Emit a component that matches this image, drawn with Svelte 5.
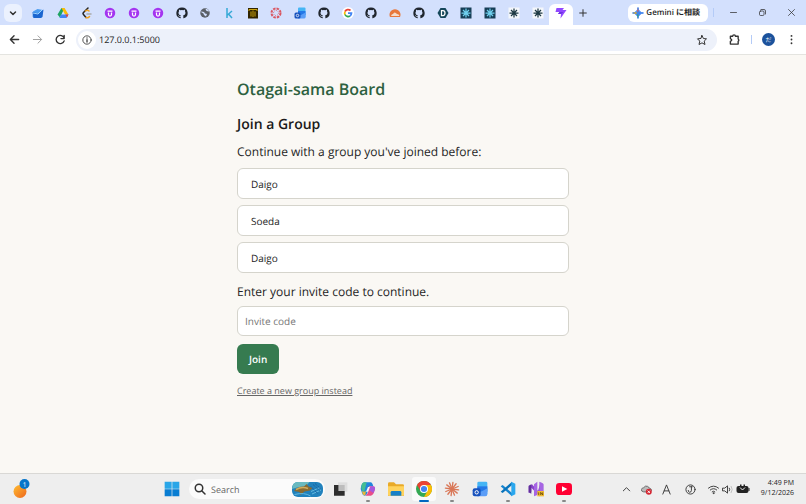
<script>
  let inviteCode = "";
  let address = "127.0.0.1:5000";
  let search = "";

  const groups = ["Daigo", "Soeda", "Daigo"];

  const tabs = [
    "mail",
    "drive",
    "leetcode",
    "udemy",
    "udemy",
    "udemy",
    "github",
    "globe",
    "kaggle",
    "pillars",
    "canvas",
    "outlook",
    "github",
    "google",
    "github",
    "sunrise",
    "github",
    "hexagon",
    "react",
    "react",
    "spark",
    "spark",
    "vite",
  ];

  const apps = [
    { name: "copilot", running: true },
    { name: "folder" },
    { name: "chrome", running: true, active: true },
    { name: "claude", running: true },
    { name: "outlook" },
    { name: "vscode", running: true },
    { name: "visualstudio" },
    { name: "youtube", running: true },
  ];

  const spokes = [0, 30, 60, 90, 120, 150, 180, 210, 240, 270, 300, 330];
</script>

<style>
  :global(body) {
    background-color: #faf8f4;
    font-family: "Open Sans", "Noto Sans CJK JP", sans-serif;
    text-rendering: geometricPrecision;
    color: #242424;
  }

  .window {
    min-height: 100vh;
    display: flex;
    flex-direction: column;
  }

  button,
  input {
    font-family: inherit;
    text-rendering: inherit;
    color: inherit;
    margin: 0;
    padding: 0;
    border: 0;
    background: none;
    box-sizing: border-box;
    outline: none;
  }

  button {
    display: flex;
    align-items: center;
    justify-content: center;
    cursor: pointer;
  }

  svg {
    display: block;
    width: 100%;
    height: 100%;
  }

  .icon {
    display: block;
    flex: none;
    width: 12px;
    height: 12px;
  }

  .tabstrip {
    display: flex;
    align-items: center;
    height: 25px;
    background-color: #d3e0fd;
  }

  .tabsearch {
    flex: none;
    width: 18px;
    height: 18px;
    margin-left: 4px;
    border-radius: 6px;
    background-color: #ebf1fe;
  }

  .tabs {
    display: flex;
    flex: 0 1 549px;
    height: 100%;
    margin-left: 2px;
  }

  .tab {
    flex: 1;
    min-width: 0;
    height: 100%;
  }

  .tab:first-child {
    flex: 0 0 27px;
  }

  .tab.active {
    height: 21px;
    margin-top: 4px;
    padding-bottom: 4px;
    border-radius: 6px 6px 0 0;
    background-color: #fff;
  }

  .newtab {
    width: 20px;
    height: 18px;
  }

  .newtab .icon {
    width: 8px;
    height: 8px;
  }

  .gemini {
    height: 18px;
    margin-left: auto;
    padding: 0 8px 0 4px;
    gap: 2px;
    border-radius: 6px;
    background-color: #fff;
    font-size: 8px;
    font-weight: 600;
    white-space: nowrap;
  }

  .divider {
    flex: none;
    width: 1px;
    height: 9px;
    background-color: #b4cbf7;
  }

  .gemini + .divider {
    margin: 0 5px;
  }

  .caption {
    width: 29px;
    height: 25px;
  }

  .caption .icon {
    width: 9px;
    height: 9px;
  }

  .toolbar {
    display: flex;
    align-items: center;
    height: 29px;
    background-color: #fff;
    border-bottom: 1px solid #e4e4e0;
  }

  .nav {
    width: 23px;
    height: 22px;
  }

  .nav .icon {
    width: 11px;
    height: 11px;
  }

  .nav:first-child {
    margin-left: 3px;
  }

  .omnibox {
    flex: 1;
    display: flex;
    align-items: center;
    height: 22px;
    margin: 0 6px 0 4px;
    padding: 0 9px 0 2px;
    border-radius: 11px;
    background-color: #edf1fa;
  }

  .info {
    width: 18px;
    height: 18px;
    border-radius: 9px;
    background-color: #fff;
  }

  .info .icon {
    width: 10px;
    height: 10px;
  }

  .omnibox input {
    flex: 1;
    min-width: 0;
    padding-left: 3px;
    font-size: 9px;
  }

  .toolbar > .divider {
    margin: 0 5px;
  }

  .avatar {
    width: 13px;
    height: 13px;
    margin: 0 5px;
    border-radius: 7px;
    background-color: #1c529c;
    color: #fff;
    font-size: 6px;
  }

  .toolbar .nav:last-child {
    margin-right: 3px;
  }

  main {
    flex: 1;
    box-sizing: border-box;
    width: 100%;
    max-width: 332px;
    margin: 0 auto;
    padding-top: 22px;
  }

  h1 {
    margin: 0;
    font-size: 16px;
    font-weight: 600;
    line-height: 24px;
    color: #2d6140;
  }

  h2 {
    margin: 14px 0 0;
    font-size: 14px;
    font-weight: 600;
    line-height: 20px;
    color: #1a1a1a;
  }

  .lead {
    display: block;
    margin: 7px 0 6px;
    font-size: 12px;
    line-height: 20px;
  }

  .groups {
    display: flex;
    flex-direction: column;
    gap: 6px;
    margin: 0 0 9px;
    padding: 0;
    list-style: none;
  }

  label.lead {
    margin: 0 0 4px;
  }

  .group,
  .code {
    width: 100%;
    height: 31px;
    border: 1px solid #d5d4cc;
    border-radius: 6px;
    background-color: #fff;
    font-size: 10px;
  }

  .group {
    justify-content: flex-start;
    padding: 0 13px;
  }

  .code {
    display: block;
    height: 30px;
    padding: 0 7px;
  }

  .code::placeholder {
    color: #757575;
    opacity: 1;
  }

  .join {
    height: 30px;
    margin: 8px 0 10px;
    padding: 0 12px;
    border-radius: 6px;
    background-color: #367b50;
    color: #fff;
    font-size: 10px;
    font-weight: 600;
  }

  .create {
    display: inline-block;
    vertical-align: top;
    font-size: 9px;
    line-height: 14px;
    color: #666;
  }

  .taskbar {
    display: flex;
    align-items: center;
    height: 30px;
    border-top: 1px solid #d9d8d5;
    background-color: #eee;
  }

  .widgets {
    flex: none;
    width: 20px;
    height: 20px;
    margin: 0 126px 0 12px;
  }

  .widgets .icon {
    width: 20px;
    height: 20px;
  }

  .app {
    position: relative;
    flex: none;
    width: 24px;
    height: 24px;
    margin: 0 2px;
    border-radius: 3px;
  }

  .apps {
    display: flex;
  }

  .app .icon {
    width: 16px;
    height: 16px;
  }

  .app.active {
    background-color: #fafafa;
  }

  .app.running::after {
    content: "";
    position: absolute;
    bottom: -1px;
    left: 50%;
    width: 4px;
    height: 2px;
    border-radius: 1px;
    background-color: #888;
    transform: translateX(-50%);
  }

  .app.active::after {
    width: 10px;
    background-color: #0067c0;
  }

  .searchbox {
    display: flex;
    align-items: center;
    flex: none;
    box-sizing: border-box;
    width: 136px;
    height: 20px;
    margin: 0 1px 0 3px;
    padding: 0 2px 0 5px;
    border-radius: 10px;
    background-color: #fbfbfb;
  }

  .searchbox input {
    flex: 1;
    min-width: 0;
    padding-left: 5px;
    font-size: 9px;
  }

  .searchbox input::placeholder {
    color: #666;
    opacity: 1;
  }

  .searchbox .highlight {
    width: 31px;
    height: 15px;
  }

  .tray {
    display: flex;
    align-items: center;
    margin-left: auto;
    padding-right: 12px;
  }

  .tray button {
    width: 20px;
    height: 24px;
  }

  .tray .wide {
    width: 28px;
  }

  .tray .status {
    width: 50px;
    gap: 3px;
    margin-right: 4px;
  }

  .tray .icon {
    width: 11px;
    height: 11px;
  }

  .tray .battery {
    width: 14px;
    height: 12px;
  }

  .tray .clock {
    flex-direction: column;
    align-items: flex-end;
    width: auto;
    min-width: 36px;
    font-size: 7px;
    line-height: 10px;
    white-space: nowrap;
  }
</style>

{#snippet icon(name, extra = "")}
  <span class="icon {extra}" aria-hidden="true">
    {#if name === "mail"}
      <svg viewBox="0 0 24 24">
        <path d="M2 9l9-5 11 2-3 16H4l-3-3z" fill="#4b9cf0" />
        <path d="M1 10l12 3 10-8-2 15-4 2H3z" fill="#1b65cf" />
        <path d="M2 12l10 2 8-8" stroke="#9bd2ff" stroke-width="2" fill="none" />
      </svg>
    {:else if name === "drive"}
      <svg viewBox="0 0 24 24">
        <path d="M9 2h6l-9 19-5-6z" fill="#1ea362" />
        <path d="M9 2h6l8 13h-7z" fill="#fbbc05" />
        <path d="M8 15h15l-4 7H5z" fill="#4285f4" />
        <path d="M17 15h6l-3 6z" fill="#ea4335" />
      </svg>
    {:else if name === "leetcode"}
      <svg viewBox="0 0 24 24" fill="none" stroke-width="3" stroke-linecap="round">
        <path d="M14 2L5 11q-2 2 0 4l5 6" stroke="#222" />
        <path d="M9 8q4-3 7 0M10 21q4 2 7-2" stroke="#f0a020" />
        <path d="M12 14h8" stroke="#aaa" />
      </svg>
    {:else if name === "udemy"}
      <svg viewBox="0 0 24 24">
        <circle cx="12" cy="12" r="10.500" fill="#a435f0" />
        <path d="M7 8h10M9 11v4q0 3 3 3t3-3v-4" fill="none" stroke="#fff" stroke-width="2.500" />
      </svg>
    {:else if name === "github"}
      <svg viewBox="0 0 24 24">
        <path fill="#20262e" d="M12 1a11 11 0 0 0-3.500 21.500c.6.100.8-.2.8-.5v-2c-3.100.7-3.800-1.300-3.800-1.300-.5-1.300-1.200-1.700-1.200-1.700-1-.7.1-.7.1-.7 1.100.1 1.700 1.200 1.700 1.200 1 1.700 2.600 1.200 3.200.9.1-.7.400-1.200.7-1.500-2.400-.3-5-1.200-5-5.500 0-1.200.4-2.200 1.100-3-.1-.3-.5-1.400.1-2.900 0 0 .9-.3 3 1.100a10 10 0 0 1 5.500 0c2.100-1.400 3-1.100 3-1.100.6 1.500.2 2.600.1 2.900.7.8 1.100 1.800 1.100 3 0 4.300-2.600 5.200-5 5.500.4.3.8 1 .8 2V22c0 .3.200.6.800.5A11 11 0 0 0 12 1z" />
      </svg>
    {:else if name === "globe"}
      <svg viewBox="0 0 24 24">
        <circle cx="12" cy="12" r="9.500" fill="#5b6067" />
        <path d="M5 9l5 1 2 3 4 1-2 5-4-3-1-3-5-3zM13 4l2 4 5 1-1-3-3-2z" fill="#d3e0fd" />
      </svg>
    {:else if name === "kaggle"}
      <svg viewBox="0 0 24 24" fill="none" stroke="#35a9d6" stroke-width="3">
        <path d="M8 2v20M18 8l-9 8M11 14l7 8" />
      </svg>
    {:else if name === "pillars"}
      <svg viewBox="0 0 24 24">
        <path d="M2 2h20v21H2z" fill="#302400" />
        <path d="M4 8V5h16v3M8 9v10M12 7v13M16 9v10" fill="none" stroke="#c9a20e" stroke-width="2" />
      </svg>
    {:else if name === "canvas"}
      <svg viewBox="0 0 24 24" fill="none" stroke="#d95560">
        <circle cx="12" cy="12" r="9" stroke-width="4" stroke-dasharray="5 2.070" />
        <circle cx="12" cy="12" r="5" stroke-width="2" stroke-dasharray="1.500 2.430" />
      </svg>
    {:else if name === "outlook"}
      <svg viewBox="0 0 24 24">
        <path d="M8 3q0-2 2-2h11q2 0 2 2v16q0 3-3 3H8z" fill="#45b5f5" />
        <path d="M8 8h15v8H8z" fill="#2478e7" />
        <path d="M5 21l18-10v9q0 3-3 3H8z" fill="#5b9df7" />
        <rect x="1" y="11" width="12" height="12" rx="3" fill="#1852bd" />
        <circle cx="7" cy="17" r="2.500" fill="none" stroke="#fff" stroke-width="1.500" />
      </svg>
    {:else if name === "google"}
      <svg viewBox="0 0 24 24">
        <circle cx="12" cy="12" r="12" fill="#fff" />
        <g fill="none" stroke-width="3.500">
          <path d="M17 7a7 7 0 0 0-11 2" stroke="#ea4335" />
          <path d="M6 9a7 7 0 0 0 0 6" stroke="#fbbc05" />
          <path d="M6 15a7 7 0 0 0 10 3" stroke="#34a853" />
          <path d="M12 12h7q0 4-3 6" stroke="#4285f4" />
        </g>
      </svg>
    {:else if name === "sunrise"}
      <svg viewBox="0 0 24 24">
        <path d="M2 20A11 11 0 1 1 22 20z" fill="#e8783c" />
        <path d="M4 18q1-4 4-4 3-6 8 0 4 0 5 4z" fill="#f6dcc9" />
      </svg>
    {:else if name === "hexagon"}
      <svg viewBox="0 0 24 24">
        <path d="M7 2h10l6 10-6 10H7L1 12z" fill="#15475a" />
        <path d="M9 7h3q4 0 4 5t-4 5H9z" fill="none" stroke="#fff" stroke-width="2.500" />
      </svg>
    {:else if name === "react" || name === "spark"}
      <svg viewBox="0 0 24 24">
        <path d="M1 1h22v22H1z" fill={name === "react" ? "#173f56" : "#f4f7fb"} />
        <path
          d="M12 3v18M3 12h18M6 6l12 12M18 6L6 18"
          stroke={name === "react" ? "#6fd0ee" : "#1d3943"}
          stroke-width="2.500" />
      </svg>
    {:else if name === "vite"}
      <svg viewBox="0 0 24 24">
        <path d="M3 2h15l-3 4h8L11 23l1-9H6l3-4H1z" fill="#9147ff" />
        <path d="M12 14H6l3-4h8z" fill="#6a35df" />
      </svg>
    {:else if name === "gemini"}
      <svg viewBox="0 0 24 24">
        <path d="M12 1q1 10 11 11-10 1-11 11Q11 13 1 12 11 11 12 1z" fill="#3e83ee" stroke="#3e83ee" stroke-width="2" />
        <path d="M12 1q0 4 1 6l-1 3-2-2q2-3 2-7z" fill="#e85d55" />
        <path d="M1 12q5-1 7-2l2 2-2 2q-2-1-7-2z" fill="#dda928" />
        <path d="M12 23q-1-5-2-7l2-2 1 3q-1 2-1 6z" fill="#35a76a" />
      </svg>
    {:else if name === "copilot"}
      <svg viewBox="0 0 24 24">
        <path d="M7 2h9q2 0 3 3l1 3h-6l-3 10q-1 4-4 4-3 0-4-4l-2-6Q2 2 7 2z" fill="#2285dc" />
        <path d="M2 10q0-8 5-8h3L7 14q-1 4-4 0z" fill="#43bd93" />
        <path d="M3 15q3 2 6 0l-1 6Q4 23 3 15z" fill="#e8ba35" />
        <path d="M14 8h5q5 0 3 6-2 8-6 8H8q3-1 4-5z" fill="#e94e88" />
        <path d="M16 8h3q5 0 3 6l-2 4-6-4z" fill="#a659dc" />
        <path d="M12 9h3l-3 7H9z" fill="#f4f4fa" />
      </svg>
    {:else if name === "folder"}
      <svg viewBox="0 0 24 24">
        <path d="M0 4q0-2 2-2h7l3 3h10q2 0 2 2v15H0z" fill="#e9aa28" />
        <path d="M0 8h24v12q0 2-2 2H2q-2 0-2-2z" fill="#ffd35d" />
        <path d="M4 22v-5q0-2 2-2h12q2 0 2 2v5z" fill="#1680c8" />
      </svg>
    {:else if name === "chrome"}
      <svg viewBox="0 0 24 24">
        <circle cx="12" cy="12" r="12" fill="#34a853" />
        <path d="M12 12L1.600 6A12 12 0 0 1 22.400 6z" fill="#ea4335" />
        <path d="M12 6h10.400A12 12 0 0 1 12 24l5.200-9z" fill="#fbbc05" />
        <path d="M1.600 6l5.200 9L12 12V6z" fill="#ea4335" />
        <circle cx="12" cy="12" r="6" fill="#fff" />
        <circle cx="12" cy="12" r="4.600" fill="#4285f4" />
      </svg>
    {:else if name === "claude"}
      <svg viewBox="0 0 24 24" stroke="#d97757" stroke-width="2" stroke-linecap="round">
        {#each spokes as angle}
          <path d="M12 12V2" transform="rotate({angle + 8} 12 12)" />
        {/each}
      </svg>
    {:else if name === "vscode"}
      <svg viewBox="0 0 24 24">
        <path d="M1 8l3-2 14 12v5z" fill="#1684cf" />
        <path d="M1 16l3 2L18 6V1z" fill="#0873bb" />
        <path d="M17 1l6 3v16l-6 3z" fill="#2aa7ee" />
      </svg>
    {:else if name === "visualstudio"}
      <svg viewBox="0 0 24 24">
        <path d="M1 8l5-3 9 10 4-13 4 3v14l-6 4L5 10v6l-4 2z" fill="#8b43cb" />
        <path d="M9 5l5-4v20l-5 2zM17 1l6 3v16l-6 3z" fill="#a665e3" />
        <path d="M1 7l4-2v14l-4-2z" fill="#62309d" />
        <path d="M14 15h10v8H14z" fill="#f0ba32" />
        <path d="M16 17v4M19 21v-4l3 4v-4" stroke="#4e3600" fill="none" />
      </svg>
    {:else if name === "youtube"}
      <svg viewBox="0 0 24 24">
        <rect y="3" width="24" height="18" rx="5" fill="#ff0033" />
        <path d="M9 8l8 4-8 4z" fill="#fff" />
      </svg>
    {:else if name === "start"}
      <svg viewBox="0 0 24 24">
        <path d="M1 1h10.500v10.500H1zM12.500 1H23v10.500H12.500z" fill="#28a6e8" />
        <path d="M1 12.500h10.500V23H1zM12.500 12.500H23V23H12.500z" fill="#087dd2" />
      </svg>
    {:else if name === "taskview"}
      <svg viewBox="0 0 24 24">
        <path d="M9 2h14v14H9z" fill="#dedede" />
        <path d="M3 6h7v9h9v7H3z" fill="#2d2d2d" />
        <path d="M10 6h9v9h-9z" fill="#bdbdbd" />
      </svg>
    {:else if name === "highlight"}
      <svg viewBox="0 0 62 30">
        <rect width="62" height="30" rx="12" fill="#2182bd" />
        <path d="M1 10Q2 0 12 0h23q-7 10-16 10T0 14z" fill="#69b9bf" />
        <path d="M4 18q8-10 20-9l5-5 4 5 8 3-5 5-11 2-8 7-2-6z" fill="#896b32" />
        <path d="M8 15q12-7 24-2" stroke="#d1ac5b" stroke-width="3" fill="none" />
        <path d="M5 25q20-5 32 3M38 19l18-8M40 24l18-8" stroke="#63b9df" stroke-width="2" fill="none" />
        <path d="M42 5l14 13M46 3l12 11M38 9l14 15" stroke="#165394" stroke-width="2" stroke-dasharray="2 2" />
      </svg>
    {:else if name === "widgets"}
      <svg viewBox="0 0 40 40">
        <defs>
          <linearGradient id="sun" x2="1" y2="1">
            <stop stop-color="#ffbd32" />
            <stop offset="1" stop-color="#ed651c" />
          </linearGradient>
        </defs>
        <circle cx="16" cy="25" r="13" fill="url(#sun)" />
        <circle cx="25" cy="10" r="10" fill="#0875c9" />
        <text x="25" y="15" text-anchor="middle" font-size="13" fill="#fff">1</text>
      </svg>
    {:else if name === "cloud"}
      <svg viewBox="0 0 24 24">
        <path d="M5 17q-5-1-4-5t5-4q3-5 8-3 3 1 4 4 5 1 5 5l-4 4z" fill="#bbb" stroke="#666" stroke-width="2" />
        <circle cx="17" cy="17" r="6.500" fill="#d52632" />
        <path d="M14.500 14.500l5 5m0-5l-5 5" stroke="#fff" stroke-width="2" />
      </svg>
    {:else if name === "battery"}
      <svg viewBox="0 0 28 24">
        <rect x="1" y="6" width="24" height="14" rx="4" fill="#222" />
        <path d="M25 10h2v6h-2zM8 3h3v4H8zM15 3h3v4h-3z" fill="#222" />
        <path d="M8 9l5 5 5-5" fill="none" stroke="#eee" stroke-width="2" />
      </svg>
    {:else}
      <svg
        viewBox="0 0 24 24"
        fill="none"
        stroke="#333"
        stroke-width="2"
        stroke-linecap="round"
        stroke-linejoin="round">
        {#if name === "chevron"}
          <path d="M7 10l5 5 5-5" stroke-width="3" />
        {:else if name === "up"}
          <path d="M5 15l7-7 7 7" />
        {:else if name === "plus"}
          <path d="M12 2v20M2 12h20" stroke-width="3" />
        {:else if name === "minimize"}
          <path d="M4 12h16" />
        {:else if name === "restore"}
          <rect x="4" y="8" width="12" height="12" rx="3" />
          <path d="M8 4h8q4 0 4 4v8" />
        {:else if name === "close"}
          <path d="M4 4l16 16M20 4L4 20" />
        {:else if name === "back"}
          <path d="M21 12H4M11 4l-8 8 8 8" stroke-width="3" />
        {:else if name === "forward"}
          <path d="M3 12h17M13 4l8 8-8 8" stroke="#999" />
        {:else if name === "reload"}
          <path d="M20 9a9 9 0 1 0 0 6M20 3v7h-7" stroke-width="3" />
        {:else if name === "info"}
          <circle cx="12" cy="12" r="10" />
          <path d="M12 11v6M12 7v.2" stroke-width="3" />
        {:else if name === "star"}
          <path d="M12 3l2.800 6 6.200.7-4.600 4.500L18 21l-6-3.300L6 21l1.500-6.800L3 9.700 9.200 9z" />
        {:else if name === "puzzle"}
          <path d="M3 5h5a3 3 0 0 1 6 0h6v6a3 3 0 0 1 0 5v6H3v-6q6-3 0-6z" stroke-width="3" />
        {:else if name === "menu"}
          <path d="M12 4v.2M12 12v.2M12 20v.2" stroke-width="4" />
        {:else if name === "search"}
          <circle cx="10" cy="10" r="7.500" stroke-width="3" />
          <path d="M16 16l6 6" stroke-width="3" />
        {:else if name === "letter"}
          <path d="M4 22L12 2l8 20M7 15h10" />
        {:else if name === "ime"}
          <circle cx="12" cy="12" r="10" />
          <path d="M14 6v8q0 4-4 4-3 0-3-4M10 6h6" />
        {:else if name === "wifi"}
          <path d="M1 9q11-9 22 0M5 13q7-6 14 0M9 17q3-3 6 0" />
          <circle cx="12" cy="20" r="1" />
        {:else if name === "speaker"}
          <path d="M2 9h4l6-5v16l-6-5H2zM16 9q2 3 0 6" />
          <path d="M20 5q5 7 0 14" stroke="#bbb" />
        {/if}
      </svg>
    {/if}
  </span>
{/snippet}

<div class="window">
  <div class="tabstrip">
    <button class="tabsearch" aria-label="Search tabs">{@render icon("chevron")}</button>
    <div class="tabs">
      {#each tabs as tab, i}
        <button class="tab" class:active={i === tabs.length - 1} aria-label={tab}>
          {@render icon(tab)}
        </button>
      {/each}
    </div>
    <button class="newtab" aria-label="New tab">{@render icon("plus")}</button>
    <button class="gemini">{@render icon("gemini")}Gemini に相談</button>
    <span class="divider"></span>
    <button class="caption" aria-label="Minimize">{@render icon("minimize")}</button>
    <button class="caption" aria-label="Restore">{@render icon("restore")}</button>
    <button class="caption" aria-label="Close">{@render icon("close")}</button>
  </div>

  <div class="toolbar">
    <button class="nav" aria-label="Back">{@render icon("back")}</button>
    <button class="nav" aria-label="Forward">{@render icon("forward")}</button>
    <button class="nav" aria-label="Reload">{@render icon("reload")}</button>
    <div class="omnibox">
      <button class="info" aria-label="Site information">{@render icon("info")}</button>
      <input type="text" aria-label="Address" bind:value={address} />
      <button aria-label="Bookmark">{@render icon("star")}</button>
    </div>
    <button class="nav" aria-label="Extensions">{@render icon("puzzle")}</button>
    <span class="divider"></span>
    <button class="avatar">だ</button>
    <button class="nav" aria-label="Menu">{@render icon("menu")}</button>
  </div>

  <main>
    <h1>Otagai-sama Board</h1>
    <h2>Join a Group</h2>
    <p class="lead">Continue with a group you've joined before:</p>
    <ul class="groups">
      {#each groups as group}
        <li><button class="group">{group}</button></li>
      {/each}
    </ul>

    <form on:submit|preventDefault>
      <label class="lead" for="code">Enter your invite code to continue.</label>
      <input
        id="code"
        class="code"
        type="text"
        placeholder="Invite code"
        bind:value={inviteCode} />
      <button class="join" type="submit">Join</button>
    </form>
    <a class="create" href="#create">Create a new group instead</a>
  </main>

  <div class="taskbar">
    <button class="widgets" aria-label="Widgets">{@render icon("widgets")}</button>
    <button class="app" aria-label="Start">{@render icon("start")}</button>
    <div class="searchbox">
      {@render icon("search")}
      <input type="text" aria-label="Search" placeholder="Search" bind:value={search} />
      {@render icon("highlight", "highlight")}
    </div>
    <button class="app" aria-label="Task view">{@render icon("taskview")}</button>
    <div class="apps">
      {#each apps as app}
        <button
          class="app"
          class:running={app.running}
          class:active={app.active}
          aria-label={app.name}>
          {@render icon(app.name)}
        </button>
      {/each}
    </div>
    <div class="tray">
      <button aria-label="Hidden icons">{@render icon("up")}</button>
      <button aria-label="Cloud storage">{@render icon("cloud")}</button>
      <button aria-label="Input mode">{@render icon("letter")}</button>
      <button class="wide" aria-label="Input method">{@render icon("ime")}</button>
      <button class="status" aria-label="Network, volume and battery">
        {@render icon("wifi")}
        {@render icon("speaker")}
        {@render icon("battery", "battery")}
      </button>
      <button class="clock"><span>4:49 PM</span><span>9/12/2026</span></button>
    </div>
  </div>
</div>
